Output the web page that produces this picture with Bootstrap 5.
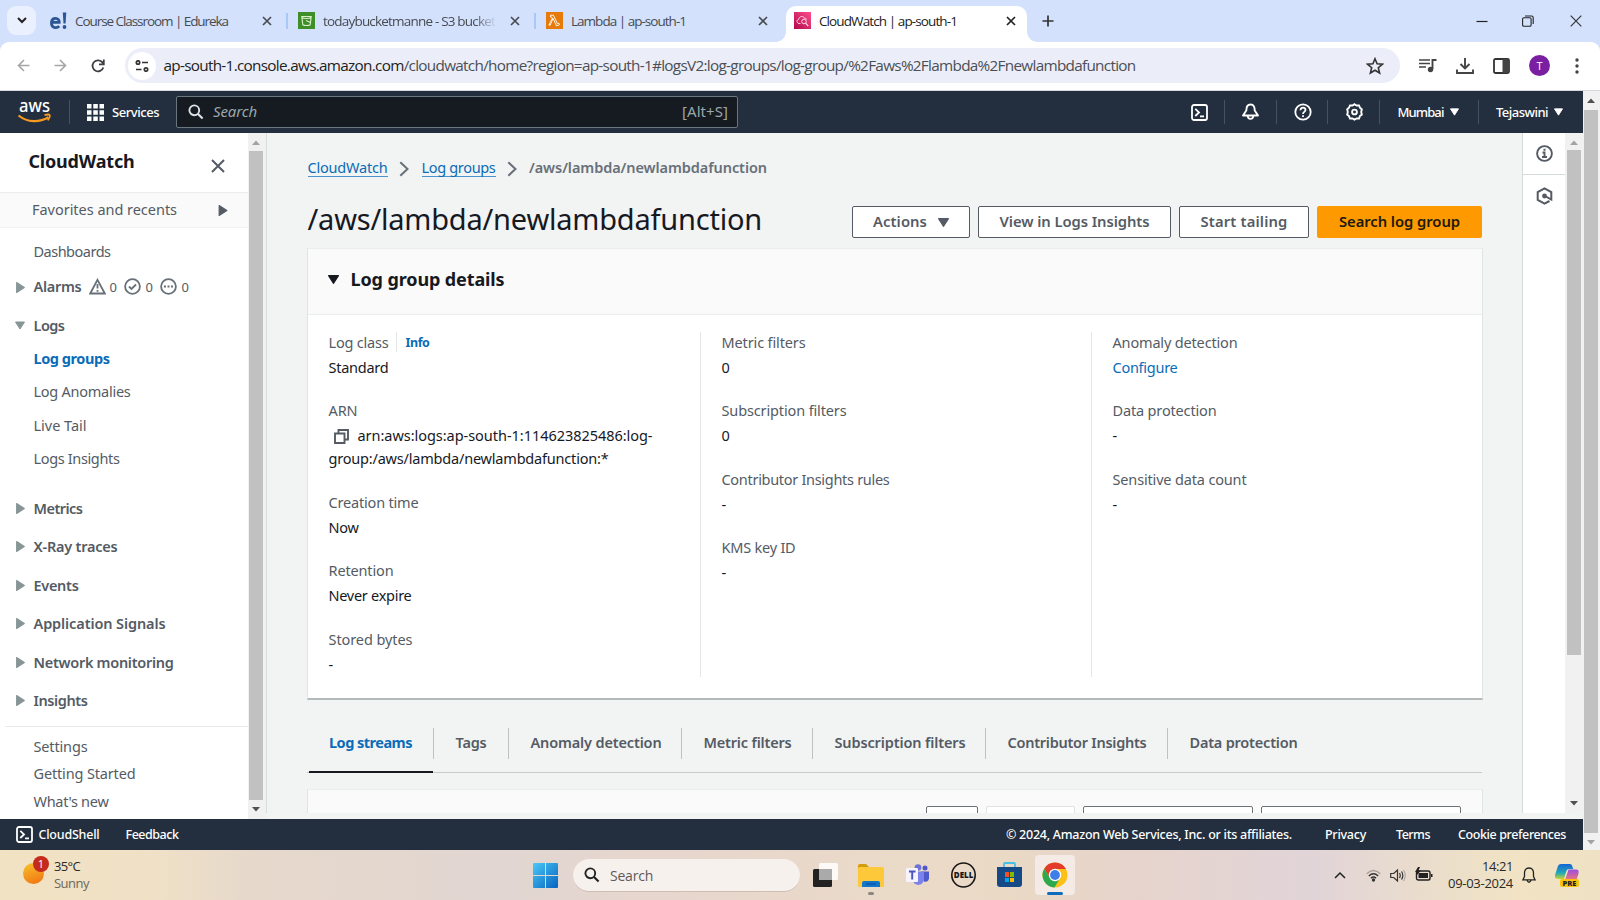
<!DOCTYPE html>
<html lang="en">
<head>
<meta charset="utf-8">
<meta name="viewport" content="width=device-width, initial-scale=1">
<title>CloudWatch | ap-south-1</title>
<link href="https://cdn.jsdelivr.net/npm/bootstrap@5.3.0/dist/css/bootstrap.min.css" rel="stylesheet">
<style>
  body{width:1600px;height:900px;overflow:hidden;font-family:"Noto Sans","Open Sans",sans-serif;font-size:14.5px;line-height:20px;color:#16191f;background:#fff}
  svg{display:block;flex:none}
  [data-w]{display:inline-block;white-space:nowrap}
  a{text-decoration:none;color:#0a6cb8}
  .ui{font-family:"Open Sans","Noto Sans",sans-serif}
  /* browser chrome */
  .tabstrip{height:42px;background:#d3e1fd}
  .tab-menu{width:29px;height:29px;margin:6px 6px 0 7px;border-radius:9px;background:#eaf0fd}
  .btab{width:241px;height:29px;margin-top:6px;padding:0 11px 0 8px;font-size:13.5px;color:#474b50}
  .btab .x{margin-left:auto}
  .btab-on{position:relative;height:36px;background:#fff;border-radius:10px 10px 0 0;color:#222;padding-bottom:7px}
  .btab-on::before,.btab-on::after{content:"";position:absolute;bottom:0;width:10px;height:10px}
  .btab-on::before{left:-10px;background:radial-gradient(circle at 0 0,transparent 9.5px,#fff 10px)}
  .btab-on::after{right:-10px;background:radial-gradient(circle at 100% 0,transparent 9.5px,#fff 10px)}
  .bsep{width:7px;height:29px;margin-top:6px}
  .bsep i{width:2px;height:16px;background:#a9c7f8}
  .fade-end{-webkit-mask-image:linear-gradient(90deg,#000 88%,transparent 101%);mask-image:linear-gradient(90deg,#000 88%,transparent 101%)}
  .toolwrap{height:49px;background:#d3e1fd}
  .toolbar{height:49px;background:#fff;border-radius:9px 9px 0 0;padding-bottom:1px;border-bottom:1px solid #d5d8dc}
  .omni{width:1275px;height:35px;border-radius:18px;background:#ebeef8;font-size:15.3px;color:#4b4f55}
  .site{width:28px;height:28px;border-radius:50%;background:#fff;margin-left:3px}
  .avatar{width:21px;height:21px;border-radius:50%;background:#7b1fa2;color:#fff;font-size:11px}
  /* console header */
  .viewport{height:759px}
  .page{width:1583px}
  .aws-top{height:42px;background:#232f3e;color:#fff;font-size:13px;font-weight:500}
  .vr-d{width:1px;height:24px;background:#47525f}
  .aws-search{width:562px;height:32px;background:#161a21;border:1px solid #6b7780;border-radius:2px;color:#9ba7ab;font-weight:400;font-size:15px;padding-bottom:2px}
  /* scrollbars */
  .sbar{background:#f1f1f1;flex:none}
  .thumb{background:#c1c1c1}
  /* sidebar */
  .content{height:686px;background:#f2f3f3}
  .side{width:248px;color:#545b64;background:#fff}
  .side-head{height:59px}
  .fav{height:36px;background:#fafafa;border-top:1px solid #ececec;border-bottom:1px solid #f2f2f2}
  .fav span{margin-bottom:2px}
  .srow{display:flex;align-items:center;padding:0 0 1.6px 33.5px;height:33.3px}
  .sgrp{display:flex;align-items:center;height:38.5px;padding:0 0 0 16px;font-weight:600}
  .sgrp svg{margin-right:8.5px;margin-top:1.5px}
  .sfoot{height:27.5px}
  /* main */
  .work{background:#f2f3f3;width:1256px;border-left:1px solid #d9dcdc;height:680px;overflow:hidden;padding-left:40px}
  .crumb a{border-bottom:1px solid #4a94cc;line-height:18px}
  .title{font-size:29px;line-height:36px;font-weight:400}
  .abtn{height:32px;border:1px solid #545b64;border-radius:2px;background:#fff;color:#545b64;font-weight:600;font-size:14.8px;padding:0 0 2px;line-height:20px;display:flex;align-items:center;justify-content:center}
  .abtn-o{background:#ff9900;border-color:#ff9900;color:#201a0c}
  .panel{width:1176px;background:#fff;border:1px solid #e2e4e4;border-top-color:#eaeded;border-radius:0}
  .panel-1{height:452px;border-bottom:2px solid #b4b9bb}
  .panel-h{height:66px;background:#fafafa;border-bottom:1px solid #eaeded}
  .kv{height:345px;border-left:1px solid #e3e6e6;padding-left:21px;width:391px}
  .kv:first-child{border-left:0;padding-left:20.5px;width:391.5px}
  .k{color:#545b64;height:21px;margin-top:-.5px}
  .v{height:23px;margin-top:3px;margin-bottom:22.1px;line-height:23px}
  .atab{font-weight:600;color:#545b64;height:31px;border-left:1px solid #bcc2c3;padding:4px 0 0 21.5px}
  .cut{height:14px;border:1px solid #6c7278;border-radius:2px;background:#fff}
  .rail{width:43px;background:#fff;border-left:1px solid #d5dbdb;height:680px}
  .aws-foot{height:31px;background:#232f3e;color:#fff;font-size:12.5px;font-weight:500}
  /* taskbar */
  .taskbar{height:50px;color:#2b2a28;font-size:13px;background:linear-gradient(90deg,#f1e2c3 0,#f0e1c6 9%,#e6d8cb 16%,#e1d6d2 31%,#e7d6cd 42%,#eadac8 56%,#e9d9c5 63%,#e7d4cb 70%,#e1d4d8 82%,#eaddcc 89%,#f1e3c3 95%,#efe2c4 100%)}
  .tsearch{width:227px;height:33px;border-radius:17px;background:#f7f1ee;border-bottom:1px solid #cdbfb6;color:#5d5a58}
  .tcell{position:relative;width:40px;height:40px;border-radius:4px}
  .tcell-on{background:#f4ebe7}
  .pip{position:absolute;left:50%;bottom:0;height:3px;border-radius:2px;transform:translateX(-50%)}
  .sun{position:relative;width:21px;height:21px;border-radius:50%;background:linear-gradient(160deg,#f7c22d,#f0700f)}
  .nbadge{position:absolute;left:10px;top:-7px;width:16px;height:16px;border-radius:50%;background:#c42b1c;color:#fff;font-size:11px;line-height:16px;text-align:center}
</style>
</head>
<body>
<svg width="0" height="0" class="position-absolute">
  <symbol id="x" viewBox="0 0 10 10"><path d="M1 1l8 8M9 1l-8 8" stroke="currentColor" stroke-width="1.7"/></symbol>
  <symbol id="xs" viewBox="0 0 14 14"><path d="M1 1l12 12M13 1L1 13" stroke="currentColor" stroke-width="2"/></symbol>
  <symbol id="tr" viewBox="0 0 8 10"><path d="M.5.5v9L7.5 5z" fill="currentColor" stroke="currentColor" stroke-linejoin="round"/></symbol>
  <symbol id="td" viewBox="0 0 10 8"><path d="M.5.5h9L5 7.5z" fill="currentColor" stroke="currentColor" stroke-linejoin="round"/></symbol>
  <symbol id="shell" viewBox="0 0 17 17"><rect x="1" y="1" width="15" height="15" rx="2" fill="none" stroke="currentColor" stroke-width="1.8"/><path d="M4.3 4.8L8 8.4l-3.7 3.6M9 12.3h4" fill="none" stroke="currentColor" stroke-width="1.8"/></symbol>
  <symbol id="chev" viewBox="0 0 10 16"><path d="M1.3 1.3L8.5 8l-7.2 6.7" fill="none" stroke="#687078" stroke-width="2"/></symbol>
  <symbol id="mag" viewBox="0 0 16 16"><circle cx="6.3" cy="6.3" r="4.9" fill="none" stroke="currentColor" stroke-width="1.9"/><path d="M9.8 9.8l4.8 4.8" stroke="currentColor" stroke-width="2.1"/></symbol>
</svg>

<!-- browser tabs -->
<div class="tabstrip d-flex ui">
  <div class="tab-menu d-flex align-items-center justify-content-center"><svg width="10" height="7"><path d="M1 1l4 4 4-4" fill="none" stroke="#222" stroke-width="2"/></svg></div>
  <div class="btab d-flex align-items-center">
    <svg width="17" height="18" viewBox="0 0 17 18" class="me-2"><path d="M1.500 10.300h7.700c.3-5-7-5.600-7.700-.2-.5 6.500 5.500 6.500 7.700 4" fill="none" stroke="#2b5797" stroke-width="2.800"/><path d="M12.800.5h3.500l-.7 11h-2.100z" fill="#2b5797"/><circle cx="14.500" cy="15" r="1.900" fill="#2b5797"/></svg>
    <span data-w="153">Course Classroom | Edureka</span>
    <svg class="x" width="10" height="10"><use href="#x"/></svg>
  </div>
  <div class="bsep d-flex align-items-center justify-content-center"><i></i></div>
  <div class="btab d-flex align-items-center">
    <svg width="17" height="17" class="me-2"><rect width="17" height="17" fill="#3f8f29"/><path d="M3.800 4.500h9.400l-1 8.300c-1.500 1-5.900 1-7.400 0zM4 5.500c2 1.300 7 1.300 9 0M8 8.500l5 2.200" fill="none" stroke="#d9f0c9" stroke-width="1.100"/></svg>
    <span class="fade-end" data-w="172">todaybucketmanne - S3 bucket</span>
    <svg class="x" width="10" height="10"><use href="#x"/></svg>
  </div>
  <div class="bsep d-flex align-items-center justify-content-center"><i></i></div>
  <div class="btab d-flex align-items-center">
    <svg width="17" height="17" class="me-2"><rect width="17" height="17" fill="#e87a0c"/><path d="M4.500 3.200h2.900l4 8.500 1.500-.5.600 1.500-3 1.200-3.500-7.600-2.800 6.900H2.900L6.200 6.500 5.700 5H4.500z" fill="none" stroke="#fff" stroke-width=".9"/></svg>
    <span data-w="115">Lambda | ap-south-1</span>
    <svg class="x" width="10" height="10"><use href="#x"/></svg>
  </div>
  <div class="bsep"></div>
  <div class="btab btab-on d-flex align-items-center">
    <svg width="17" height="17" class="me-2"><defs><linearGradient id="cw" x1="0" y1="1" x2="1" y2="0"><stop stop-color="#b0084d"/><stop offset="1" stop-color="#ff4f8b"/></linearGradient></defs><rect width="17" height="17" fill="url(#cw)"/><path d="M6.500 11.500H5c-2.700-.5-2.600-3.800-.3-4C5 4 9.500 3.500 10.500 6.300c1.200-.3 2 .2 2.200 1" fill="none" stroke="#ffd3e4" stroke-width="1"/><circle cx="10" cy="9.500" r="2.300" fill="none" stroke="#ffd3e4"/><path d="M11.600 11.200l2.600 2.800" stroke="#ffd3e4" stroke-width="1.200"/></svg>
    <span data-w="138">CloudWatch | ap-south-1</span>
    <svg class="x" width="10" height="10"><use href="#x"/></svg>
  </div>
  <svg width="12" height="12" style="margin:15px 0 0 15px"><path d="M6 .5v11M.5 6h11" stroke="#333" stroke-width="1.700"/></svg>
  <div class="d-flex align-items-center ms-auto" style="height:41px;padding-right:18px">
    <svg width="12" height="12" style="margin-right:34px"><path d="M.5 6.500h11" stroke="#222" stroke-width="1.200"/></svg>
    <svg width="12" height="12" style="margin-right:36px"><rect x=".6" y="2.800" width="8.500" height="8.500" rx="1.300" fill="none" stroke="#222" stroke-width="1.100"/><path d="M3 1h6.500q1.700 0 1.700 1.700V9" fill="none" stroke="#222" stroke-width="1.100"/></svg>
    <svg width="12" height="12"><path d="M.7.7l10.600 10.600M11.300.7L.7 11.300" stroke="#333" stroke-width="1.200"/></svg>
  </div>
</div>

<!-- address bar -->
<div class="toolwrap">
<div class="toolbar d-flex align-items-center ui">
  <svg width="13" height="13" style="margin-left:17px"><path d="M12.500 6.500H1.500M7 1L1.500 6.500 7 12" fill="none" stroke="#a6a6a6" stroke-width="1.600"/></svg>
  <svg width="13" height="13" style="margin-left:24px"><path d="M.5 6.500h11M6 1l5.500 5.500L6 12" fill="none" stroke="#a6a6a6" stroke-width="1.600"/></svg>
  <svg width="14" height="14" style="margin-left:24px"><path d="M12.300 8.500A5.500 5.500 0 1 1 11 3l1.600 1.800M12.800.5v4.800H8" fill="none" stroke="#3c3f43" stroke-width="1.800"/></svg>
  <div class="omni d-flex align-items-center" style="margin-left:20px">
    <div class="site d-flex align-items-center justify-content-center"><svg width="14" height="12" fill="none" stroke="#333" stroke-width="1.700"><circle cx="3" cy="2.500" r="1.700"/><path d="M7 2.500h6M1 9.500h5.500"/><circle cx="11" cy="9.500" r="1.700"/></svg></div>
    <span data-w="972" style="margin-left:7.500px;padding-bottom:1px"><span style="color:#222">ap-south-1.console.aws.amazon.com</span>/cloudwatch/home?region=ap-south-1#logsV2:log-groups/log-group/%2Faws%2Flambda%2Fnewlambdafunction</span>
    <svg width="18" height="18" viewBox="0 0 18 18" class="ms-auto" style="margin-right:16px"><path d="M9 1.800l2.100 5 5.300.4-4.100 3.500 1.300 5.300L9 13.200 4.400 16l1.300-5.300L1.600 7.200l5.300-.4z" fill="none" stroke="#333" stroke-width="1.600"/></svg>
  </div>
  <svg width="18" height="15" style="margin-left:19px"><path d="M0 2h11M0 5.500h11M0 9h7" stroke="#444" stroke-width="1.700"/><path d="M13.500 11V2h4" fill="none" stroke="#444" stroke-width="1.900"/><circle cx="11.500" cy="11.500" r="2.700" fill="#444"/></svg>
  <svg width="18" height="18" style="margin-left:18.500px"><path d="M9 1v10M4.500 7L9 11.500 13.500 7M1 12.500V16h16v-3.500" fill="none" stroke="#444" stroke-width="1.900"/></svg>
  <svg width="17" height="16" style="margin-left:19.500px"><rect x="1" y="1" width="15" height="14" rx="1.500" fill="none" stroke="#333" stroke-width="1.800"/><path d="M9.500 1H15v14H9.500z" fill="#444"/></svg>
  <div class="avatar d-flex align-items-center justify-content-center" style="margin-left:19px">T</div>
  <svg width="4" height="16" fill="#444" style="margin-left:25px"><circle cx="2" cy="2" r="1.700"/><circle cx="2" cy="8" r="1.700"/><circle cx="2" cy="14" r="1.700"/></svg>
</div>
</div>

<div class="viewport d-flex">
<div class="page d-flex flex-column">
  <!-- console navigation -->
  <header class="aws-top d-flex align-items-center">
    <svg width="35" height="36" viewBox="-1 -10 35 36" style="margin:-9px 0 0 17px"><text x="1" y="11.500" textLength="31" lengthAdjust="spacingAndGlyphs" font-size="18" font-weight="500" fill="#fff">aws</text><path d="M.5 15.500c9.500 7.500 21 7 30 1.800" fill="none" stroke="#f79a1f" stroke-width="2.200"/><path d="M26.500 15.300c3-1.100 5-.6 5.200-.3.500.8-.2 3.600-2 5.300" fill="none" stroke="#f79a1f" stroke-width="1.700"/></svg>
    <div class="vr-d" style="margin-left:17px"></div>
    <svg width="17" height="17" fill="#fff" style="margin-left:16.500px"><path d="M0 0h4.500v4.500H0zM6.300 0h4.500v4.500H6.300zM12.500 0H17v4.500h-4.500zM0 6.300h4.500v4.500H0zM6.300 6.300h4.500v4.500H6.300zM12.500 6.300H17v4.500h-4.500zM0 12.500h4.500V17H0zM6.300 12.500h4.500V17H6.300zM12.500 12.500H17V17h-4.500z"/></svg>
    <span data-w="47" style="margin-left:8.500px">Services</span>
    <div class="aws-search d-flex align-items-center" style="margin-left:17px">
      <svg width="16" height="16" style="margin:2px 0 0 11px;color:#dfe3e6"><use href="#mag"/></svg>
      <i data-w="44" style="margin-left:9px">Search</i>
      <span class="ms-auto" data-w="46" style="margin-right:9px">[Alt+S]</span>
    </div>
    <div class="d-flex align-items-center ms-auto">
      <svg width="17" height="17"><use href="#shell"/></svg>
      <div class="vr-d" style="margin:0 17.500px 0 16px"></div>
      <svg width="17" height="18" fill="none" stroke="#fff" stroke-width="1.900" stroke-linejoin="round"><path d="M8.500 1.500C5 1.500 4.300 4.500 4.300 7.500L1 12.500h15l-3.300-5c0-3-.7-6-4.200-6zM5.500 12.500c.5 4.500 5.500 4.500 6 0"/></svg>
      <div class="vr-d" style="margin:0 16.500px 0 17px"></div>
      <svg width="18" height="18" fill="none" stroke="#fff" stroke-width="1.800"><circle cx="9" cy="9" r="7.700"/><path d="M6.500 7.300C6.500 3.700 11.700 4 11.500 7c-.1 2-2.500 1.800-2.500 4M9 12.200v1.800"/></svg>
      <div class="vr-d" style="margin:0 18px 0 15.500px"></div>
      <svg width="17" height="18" fill="none" stroke="#fff" stroke-width="1.900"><path d="M8.500 1.200l2 1.300 2.500-.1 1 2.400 1.800 1.600-.6 2.600.6 2.600-1.900 1.500-.9 2.400-2.500-.1-2 1.300-2-1.300-2.500.1-1-2.400-1.800-1.500.6-2.600-.6-2.600L3 4.800 4 2.400l2.500.1z"/><circle cx="8.500" cy="9" r="2.400"/></svg>
      <div class="vr-d" style="margin:0 17.500px 0 16px"></div>
      <span data-w="46">Mumbai</span>
      <svg width="9" height="8" style="margin-left:6px"><use href="#td"/></svg>
      <div class="vr-d" style="margin:0 17.500px 0 19px"></div>
      <span data-w="52">Tejaswini</span>
      <svg width="9" height="8" style="margin:0 20px 0 6px"><use href="#td"/></svg>
    </div>
  </header>

  <div class="content d-flex">
    <!-- service navigation -->
    <nav class="side">
      <div class="side-head d-flex justify-content-between">
        <span data-w="106" class="fw-bold" style="font-size:18px;color:#16191f;margin:18px 0 0 28.500px">CloudWatch</span>
        <svg width="14" height="14" style="color:#545b64;margin:26px 23px 0 0"><use href="#xs"/></svg>
      </div>
      <div class="fav d-flex align-items-center justify-content-between">
        <span data-w="145" style="margin-left:32px">Favorites and recents</span>
        <svg width="10" height="11" style="margin-right:20px"><use href="#tr"/></svg>
      </div>
      <div class="srow" style="margin-top:7px"><span data-w="77">Dashboards</span></div>
      <div class="sgrp" style="height:37px"><svg width="9" height="11" color="#879596"><use href="#tr"/></svg><span data-w="48" style="margin-bottom:1px">Alarms</span>
        <svg width="17" height="17" style="margin:0 4px 0 7px" fill="none" stroke="#687078" stroke-width="1.800"><path d="M8.500 1.800L15.800 15.500H1.200zM8.500 6v4.500M8.500 12v1.800"/></svg><span class="fw-normal" style="font-size:13px">0</span>
        <svg width="17" height="17" style="margin:0 4px 0 7.500px" fill="none" stroke="#687078" stroke-width="1.800"><circle cx="8.500" cy="8.500" r="7.400"/><path d="M5 8.500l2.500 2.500L12 6.500"/></svg><span class="fw-normal" style="font-size:13px">0</span>
        <svg width="17" height="17" style="margin:0 4px 0 7.500px" fill="none" stroke="#687078" stroke-width="1.800"><circle cx="8.500" cy="8.500" r="7.400"/><path d="M4 8.500h2M7.500 8.500h2M11 8.500h2"/></svg><span class="fw-normal" style="font-size:13px">0</span>
      </div>
      <div class="sgrp" style="height:33px;margin-top:3px"><svg width="10" height="9" color="#879596" style="margin-left:-1px"><use href="#td"/></svg><span data-w="31">Logs</span></div>
      <div class="srow" style="margin-top:1px"><a href="#" class="fw-bold" data-w="76">Log groups</a></div>
      <div class="srow"><span data-w="97">Log Anomalies</span></div>
      <div class="srow"><span data-w="53">Live Tail</span></div>
      <div class="srow"><span data-w="86">Logs Insights</span></div>
      <div style="height:13px"></div>
      <div class="sgrp"><svg width="9" height="11" color="#879596"><use href="#tr"/></svg><span data-w="49">Metrics</span></div>
      <div class="sgrp"><svg width="9" height="11" color="#879596"><use href="#tr"/></svg><span data-w="84">X-Ray traces</span></div>
      <div class="sgrp"><svg width="9" height="11" color="#879596"><use href="#tr"/></svg><span data-w="45">Events</span></div>
      <div class="sgrp"><svg width="9" height="11" color="#879596"><use href="#tr"/></svg><span data-w="132">Application Signals</span></div>
      <div class="sgrp"><svg width="9" height="11" color="#879596"><use href="#tr"/></svg><span data-w="140">Network monitoring</span></div>
      <div class="sgrp"><svg width="9" height="11" color="#879596"><use href="#tr"/></svg><span data-w="54">Insights</span></div>
      <div style="height:1px;background:#e8ebeb;margin:7px 0 5.500px 5px"></div>
      <div class="srow sfoot"><span data-w="54">Settings</span></div>
      <div class="srow sfoot"><span data-w="102">Getting Started</span></div>
      <div class="srow sfoot"><span data-w="75">What's new</span></div>
    </nav>
    <div class="sbar d-flex flex-column align-items-center" style="width:18px;padding-right:2px">
      <svg width="8" height="5" style="margin:7px 0 6px"><path d="M0 5l4-4.500L8 5z" fill="#a3a3a3"/></svg>
      <div class="thumb" style="width:14px;height:649px"></div>
      <svg width="8" height="5" style="margin-top:7px"><path d="M0 0l4 4.500L8 0z" fill="#505050"/></svg>
    </div>

    <!-- log group -->
    <main class="work flex-shrink-0">
      <nav class="crumb d-flex align-items-center" style="height:20px;margin-top:24px;padding-left:.5px">
        <a href="#" data-w="80">CloudWatch</a>
        <svg width="10" height="16" style="margin:3px 12.500px 0 11.500px"><use href="#chev"/></svg>
        <a href="#" data-w="74">Log groups</a>
        <svg width="10" height="16" style="margin:3px 12px 0 11.500px"><use href="#chev"/></svg>
        <span data-w="238" style="color:#687078;font-weight:600">/aws/lambda/newlambdafunction</span>
      </nav>
      <div class="d-flex" style="margin-top:24px;height:47px">
        <h1 class="title m-0" data-w="455" style="padding-left:.5px">/aws/lambda/newlambdafunction</h1>
        <div class="d-flex gap-2 ms-auto" style="margin:5px 40px 0 0">
          <button class="abtn btn" style="width:118px"><span data-w="54">Actions</span><svg width="11" height="9" style="margin:2px 0 0 11px"><use href="#td"/></svg></button>
          <button class="abtn btn" style="width:193px"><span data-w="150">View in Logs Insights</span></button>
          <button class="abtn btn" style="width:130px"><span data-w="87">Start tailing</span></button>
          <button class="abtn abtn-o btn" style="width:165px"><span data-w="121">Search log group</span></button>
        </div>
      </div>
      <section class="panel panel-1 card">
        <div class="panel-h d-flex align-items-center"><svg width="11" height="9" style="margin:-5px 0 0 20px"><use href="#td"/></svg><span data-w="154" class="fw-bold" style="font-size:18px;margin:-6px 0 0 11.500px">Log group details</span></div>
        <div class="d-flex" style="padding-top:17px">
          <div class="kv">
            <div class="k d-flex"><span data-w="60">Log class</span><div style="width:1px;height:20px;background:#e3e6e6;margin:0 8px"></div><a href="#" data-w="24" class="fw-bold" style="font-size:12.500px;line-height:21px">Info</a></div>
            <div class="v"><span data-w="60">Standard</span></div>
            <div class="k"><span data-w="29">ARN</span></div>
            <div class="v" style="height:46px"><div class="d-flex align-items-center"><svg width="15" height="15" style="margin:1px 9px 0 5px" fill="none" stroke="#545b64" stroke-width="1.900"><path d="M1 4.500h9.500V14H1zM4.500 4.500V1H14v9.500h-3.500"/></svg><span data-w="295">arn:aws:logs:ap-south-1:114623825486:log-</span></div><span data-w="280">group:/aws/lambda/newlambdafunction:*</span></div>
            <div class="k"><span data-w="90">Creation time</span></div>
            <div class="v"><span data-w="30">Now</span></div>
            <div class="k"><span data-w="65">Retention</span></div>
            <div class="v"><span data-w="83">Never expire</span></div>
            <div class="k"><span data-w="84">Stored bytes</span></div>
            <div class="v">-</div>
          </div>
          <div class="kv">
            <div class="k"><span data-w="84">Metric filters</span></div>
            <div class="v">0</div>
            <div class="k"><span data-w="125">Subscription filters</span></div>
            <div class="v">0</div>
            <div class="k"><span data-w="168">Contributor Insights rules</span></div>
            <div class="v">-</div>
            <div class="k"><span data-w="74">KMS key ID</span></div>
            <div class="v">-</div>
          </div>
          <div class="kv">
            <div class="k"><span data-w="125">Anomaly detection</span></div>
            <div class="v"><a href="#" data-w="65">Configure</a></div>
            <div class="k"><span data-w="104">Data protection</span></div>
            <div class="v">-</div>
            <div class="k"><span data-w="134">Sensitive data count</span></div>
            <div class="v">-</div>
          </div>
        </div>
      </section>
      <div class="d-flex" style="margin-top:28px;width:1175px;height:45px;border-bottom:1px solid #c6cbcc">
        <div style="width:126px;height:45px;padding-left:1.500px"><div style="height:45px;width:124px;padding:4px 0 0 20.500px;border-bottom:2px solid #16191f"><a href="#" class="fw-bold" data-w="83">Log streams</a></div></div>
        <div class="atab" style="width:75px"><span data-w="31">Tags</span></div>
        <div class="atab" style="width:173px"><span data-w="131">Anomaly detection</span></div>
        <div class="atab" style="width:131px"><span data-w="88">Metric filters</span></div>
        <div class="atab" style="width:173px"><span data-w="131">Subscription filters</span></div>
        <div class="atab" style="width:182px"><span data-w="139">Contributor Insights</span></div>
        <div class="atab"><span data-w="108">Data protection</span></div>
      </div>
      <section class="panel" style="height:40px;background:#fafafa;margin-top:16px">
        <div class="d-flex" style="padding:16px 20px 0 618px;gap:8px">
          <div class="cut" style="width:52px"></div>
          <div class="cut" style="width:89px;border-color:#dfe3e3"></div>
          <div class="cut" style="width:170px"></div>
          <div class="cut" style="width:200px"></div>
        </div>
      </section>
    </main>

    <aside class="rail flex-shrink-0">
      <div class="d-flex justify-content-center" style="height:42px;padding-top:12px;border-bottom:1px solid #d5dbdb"><svg width="17" height="17" fill="none" stroke="#545b64" stroke-width="1.900"><circle cx="8.500" cy="8.500" r="7.400"/><path d="M6.500 7.500h2v4.500M6 12h5M7.500 4.700h2"/></svg></div>
      <div class="d-flex justify-content-center" style="padding-top:12px"><svg width="17" height="18" fill="none" stroke="#545b64" stroke-width="2"><path d="M13.500 14l-5 2.700-6.800-3.900V5L8.500 1.300 15.300 5v7.500L9 9"/><circle cx="8.500" cy="9" r="1.400" fill="#545b64"/></svg></div>
    </aside>
    <div class="sbar d-flex flex-column align-items-center flex-grow-1" style="height:680px">
      <svg width="8" height="5" style="margin:7px 0 5px"><path d="M0 5l4-4.500L8 5z" fill="#a3a3a3"/></svg>
      <div class="thumb" style="width:14px;height:505px"></div>
      <svg width="8" height="5" style="margin-top:146px"><path d="M0 0l4 4.500L8 0z" fill="#505050"/></svg>
    </div>
  </div>

  <footer class="aws-foot d-flex align-items-center">
    <svg width="17" height="17" style="margin-left:16px"><use href="#shell"/></svg>
    <span data-w="61" style="margin:1px 0 0 5.500px">CloudShell</span>
    <span data-w="53" style="margin:1px 0 0 26px">Feedback</span>
    <span data-w="286" class="ms-auto" style="margin-top:1px">© 2024, Amazon Web Services, Inc. or its affiliates.</span>
    <span data-w="41" style="margin-left:33px">Privacy</span>
    <span data-w="34" style="margin-left:30px">Terms</span>
    <span data-w="108" style="margin:1px 17px 0 28px">Cookie preferences</span>
  </footer>
</div>
<div class="sbar d-flex flex-column align-items-center" style="width:17px;padding-right:1px">
  <svg width="8" height="5" style="margin:7px 0"><path d="M0 5l4-4.500L8 5z" fill="#505050"/></svg>
  <div class="thumb" style="width:14px;height:723px"></div>
  <svg width="8" height="5" style="margin-top:7px"><path d="M0 0l4 4.500L8 0z" fill="#a3a3a3"/></svg>
</div>
</div>

<!-- taskbar -->
<div class="taskbar d-flex ui">
  <div class="d-flex" style="width:533px;padding:13px 0 0 23px">
    <div class="sun"><span class="nbadge">1</span></div>
    <div style="line-height:16.500px;margin:-5px 0 0 10px"><div><span data-w="26">35°C</span></div><div style="color:#6d675c"><span data-w="35">Sunny</span></div></div>
  </div>
  <svg width="25" height="25" style="margin-top:13px"><defs><linearGradient id="win" x1="0" y1="0" x2="1" y2="1"><stop stop-color="#4cc8f7"/><stop offset="1" stop-color="#0663bf"/></linearGradient></defs><path d="M1 0h11v12H0V1q0-1 1-1zM13 0h11q1 0 1 1v11H13zM0 13h12v12H1q-1 0-1-1zM13 13h12v11q0 1-1 1H13z" fill="url(#win)"/></svg>
  <div class="tsearch d-flex align-items-center" style="margin:9px 0 0 15px"><svg width="16" height="16" style="margin-left:11px;color:#222"><use href="#mag"/></svg><span data-w="43" style="margin:1px 0 0 10px;font-size:14px">Search</span></div>
  <div class="d-flex" style="padding:5px 0 0 5px;gap:6px">
    <div class="tcell d-flex align-items-center justify-content-center"><svg width="25" height="24"><rect x="0" y="6" width="19" height="18" rx="1.500" fill="#222"/><rect x="6" y="0" width="19" height="17" rx="1.500" fill="#fff" opacity=".85"/><path d="M6 6h13v11H6z" fill="#aaa"/></svg></div>
    <div class="tcell d-flex align-items-center justify-content-center"><svg width="26" height="23"><path d="M0 2q0-2 2-2h6l3 3v5H0z" fill="#d49c0b"/><rect y="3" width="26" height="20" rx="1.500" fill="#fdc93a"/><path d="M4 23v-4q0-2 2-2h14q2 0 2 2v4z" fill="#1275cc"/><path d="M8 20h10" stroke="#0a4c92"/></svg><span class="pip" style="width:6px;background:#8c8580"></span></div>
    <div class="tcell d-flex align-items-center justify-content-center"><svg width="23" height="22"><circle cx="12" cy="3.500" r="3.300" fill="#6c73d8"/><circle cx="19" cy="4" r="2.500" fill="#5059c9"/><path d="M15 7.500h8v7q-1 4-5 3z" fill="#5059c9"/><path d="M6 7.500h12v8c-1 7-10 7-11 1z" fill="#7b83eb"/><rect y="4" width="12" height="14" rx="1" fill="#f5f3fd"/><path d="M3 7.500h6.500M6.200 7.500v8" stroke="#4b53bc" stroke-width="1.900"/></svg></div>
    <div class="tcell d-flex align-items-center justify-content-center"><svg width="25" height="26"><ellipse cx="12.500" cy="13" rx="11.700" ry="12" fill="none" stroke="#161616" stroke-width="1.600"/><text x="2.800" y="16.300" textLength="19.500" lengthAdjust="spacingAndGlyphs" font-size="9" font-weight="800" fill="#161616">DELL</text></svg></div>
    <div class="tcell d-flex align-items-center justify-content-center"><svg width="25" height="26"><path d="M7 6V2q0-1 1-1h9q1 0 1 1v4" fill="none" stroke="#45bfe8" stroke-width="1.800"/><path d="M0 5h25v17q0 3-3 3H3q-3 0-3-3z" fill="#164a86"/><path d="M8 10h4v5H8z" fill="#f25022"/><path d="M13 10h4v5h-4z" fill="#7fba00"/><path d="M8 16h4v4H8z" fill="#00a4ef"/><path d="M13 16h4v4h-4z" fill="#ffb900"/></svg></div>
    <div class="tcell tcell-on d-flex align-items-center justify-content-center"><svg width="26" height="26" viewBox="-13 -13 26 26"><circle r="12.500" fill="#fbc116"/><path d="M0-6h11a12.500 12.500 0 0 0-21.800-.3L-5 3z" fill="#e33b2e"/><path d="M-10.800-6.300A12.500 12.500 0 0 0-.5 12.500L5 3-5 3z" fill="#2da94f"/><circle r="6.200" fill="#fff"/><circle r="4.900" fill="#3f7ee8"/></svg><span class="pip" style="width:16px;background:#0f6cbd"></span></div>
  </div>
  <div class="d-flex ms-auto" style="padding-right:20px">
    <svg width="12" height="8" style="margin:21px 19.500px 0 0"><path d="M1 7l5-5 5 5" fill="none" stroke="#222" stroke-width="1.500"/></svg>
    <svg width="15" height="13" style="margin:19px 9px 0 0" fill="none" stroke="#333" stroke-width="1.300"><path d="M.7 4.800q6.800-6.600 13.600 0" stroke="#a69f98"/><path d="M2.800 7q4.700-4.400 9.400 0M4.900 9.200q2.600-2.300 5.200 0"/><circle cx="7.500" cy="11" r="1" fill="#222"/></svg>
    <svg width="16" height="13" style="margin:19px 9px 0 0" fill="none" stroke="#333" stroke-width="1.200"><path d="M.7 4.500h3L7.500 1v11L3.700 8.500h-3zM9.500 4q1.500 2.500 0 5M11.500 2.500q2.700 4 0 8"/><path d="M13.500 1q3.500 5.500 0 11" stroke="#b0a89f"/></svg>
    <svg width="18" height="14" style="margin:17px 14.500px 0 0"><rect x="1.500" y="4" width="13.500" height="9" rx="1.800" fill="none" stroke="#222" stroke-width="1.400"/><rect x="3.500" y="6" width="9.500" height="5" fill="#222"/><path d="M16 7h1.500v3H16zM3 0L0 5h2L1 9l5-5.500H3.500L5 0z" fill="#222"/></svg>
    <div class="text-end" style="line-height:16.500px;margin:8px 9px 0 0;width:66px"><div><span data-w="31">14:21</span></div><div><span data-w="65">09-03-2024</span></div></div>
    <svg width="14" height="17" style="margin:17px 19px 0 0" fill="none" stroke="#222" stroke-width="1.300"><path d="M7 1C3.500 1 2.500 3.500 2.500 6v3.500L.9 12.800h12.200L11.500 9.500V6C11.500 3.500 10.500 1 7 1zM5 13.500q2 3.500 4 0"/></svg>
    <svg width="25" height="25" style="margin-top:13px"><defs><linearGradient id="cp1" x1="0" y1="0" x2="0" y2="1"><stop stop-color="#1366d6"/><stop offset=".6" stop-color="#23a8b5"/><stop offset="1" stop-color="#c8d52c"/></linearGradient><linearGradient id="cp2" x1="0" y1="0" x2="0" y2="1"><stop stop-color="#9a4fe0"/><stop offset="1" stop-color="#fb7a6c"/></linearGradient></defs><path d="M6 1h9q2 0 2.600 3l.7 2h-4.500q-2 0-2.800 3l-2 7H3q-4 0-3-4L3 3q.8-2 3-2z" fill="url(#cp1)"/><path d="M13.500 6.500H21q3.500 0 2.500 4l-1.500 5q-1 3-4 3H9.500l3-9z" fill="url(#cp2)"/><rect x="5" y="16" width="19" height="8" rx="2" fill="#fdc20f"/><text x="7.500" y="22.700" textLength="14" lengthAdjust="spacingAndGlyphs" font-size="7.500" font-weight="800" fill="#222">PRE</text></svg>
  </div>
</div>

<script src="https://cdn.jsdelivr.net/npm/bootstrap@5.3.0/dist/js/bootstrap.bundle.min.js"></script>
<script>
  // track each label so that it spans the width given in data-w
  document.querySelectorAll('[data-w]').forEach(function (el) {
    var w = +el.dataset.w, n = el.textContent.length;
    var gap = (w - el.getBoundingClientRect().width) / n;
    el.style.letterSpacing = gap.toFixed(3) + 'px';
    el.style.flexShrink = 0;
  });
</script>
</body>
</html>
